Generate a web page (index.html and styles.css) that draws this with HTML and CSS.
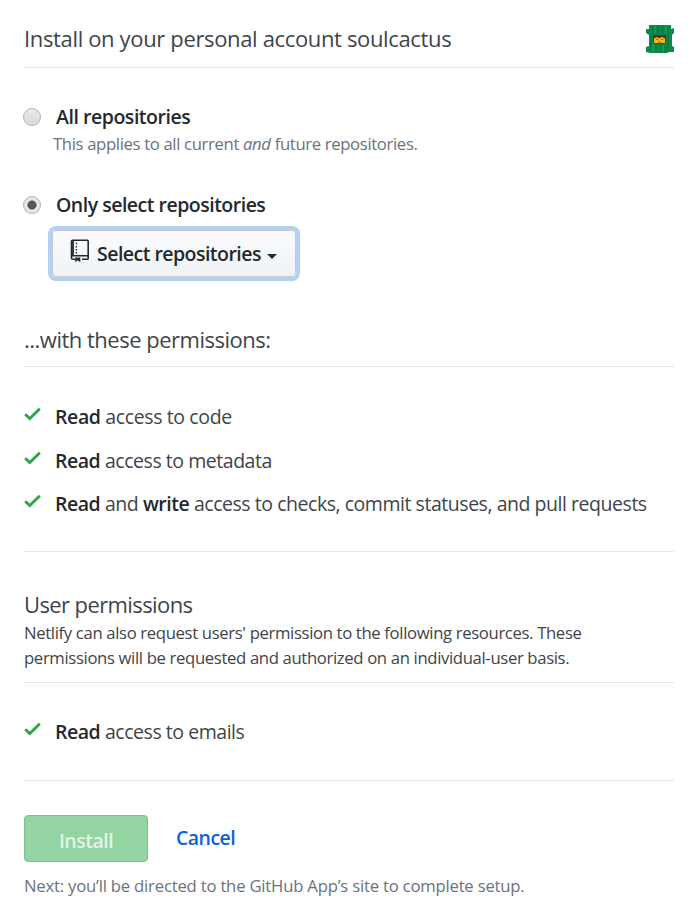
FILE: index.html
```html
<!DOCTYPE html>
<html lang="en">
<head>
<meta charset="utf-8">
<title>Install Netlify</title>
<link rel="stylesheet" href="styles.css">
</head>
<body>
<svg width="0" height="0" class="defs">
  <symbol id="check" viewBox="0 0 17 14"><path d="M1.2 7.2 5.8 11.5 15.8 1.8" fill="none" stroke="#28a745" stroke-width="2.9"/></symbol>
</svg>
<main class="page">
  <header class="header">
    <h1 class="title t-install">Install on your personal account soulcactus</h1>
    <svg class="avatar" viewBox="0 0 30 30">
      <path d="M4 1H26V5L29 4V9L27 11V22L29 23V28H24L22 29H5L1 28V23L4 22V11L1 9V5H4Z" fill="#0b8a4b"/>
      <path d="M8 2V10M13 1V9M18 2V10M23 3V26M6 12V27M11 22V28M16 21V28M20 22V28" stroke="#067540" stroke-width="1.2"/>
      <path d="M10 2V9M21 2V9M8 20V28M18 21V28" stroke="#25aa66" stroke-width="1"/>
      <path d="M8 11H21V18L19 20H10L8 18Z" fill="#543719"/>
      <path d="M9 14.500 12 13 14 14.500 17 13 20 14.500V19H9Z" fill="#f2b51d"/>
      <path d="M11 15.500H13M16 15.500H18M13 18H16" stroke="#a3620e" stroke-width="1"/>
    </svg>
  </header>

  <section class="choices">
    <label class="choice"><span class="radio"></span><strong class="t-all">All repositories</strong></label>
    <p class="note"><span class="t-applies">This applies to all current <em>and</em> future repositories.</span></p>
    <label class="choice second"><span class="radio on"></span><strong class="t-only">Only select repositories</strong></label>
    <button class="select" type="button">
      <svg class="repo" viewBox="0 0 20 24">
        <path d="M2.500 1.200H17.200Q18.200 1.200 18.200 2.200V19.200Q18.200 20.300 17.200 20.300H12M5 20.300H2.700Q1.500 20.300 1.500 19V2.200Q1.500 1.200 2.500 1.200M1.500 16.800H18.200" fill="none" stroke="#24292e" stroke-width="1.6"/>
        <path d="M3 1.500V16.500" stroke="#24292e" stroke-width="1.8"/>
        <path d="M6.400 3.800V15" stroke="#24292e" stroke-width="1.4" stroke-dasharray="1.5 1.6"/>
        <path d="M5.200 18.500H10.300V23.200L7.700 21.200 5.200 23.200Z" fill="#24292e"/>
      </svg>
      <span class="t-select">Select repositories</span>
      <span class="caret"></span>
    </button>
  </section>

  <h2 class="title permissions"><span class="t-with">...with these permissions:</span></h2>
  <ul class="list">
    <li><svg class="check"><use href="#check"/></svg><span class="t-code"><b>Read</b> access to code</span></li>
    <li><svg class="check"><use href="#check"/></svg><span class="t-meta"><b>Read</b> access to metadata</span></li>
    <li><svg class="check"><use href="#check"/></svg><span class="t-checks"><b>Read</b> and <b>write</b> access to checks, commit statuses, and pull requests</span></li>
  </ul>

  <section class="user">
    <h2 class="title"><span class="t-user">User permissions</span></h2>
    <p>Netlify can also request users' permission to the following resources. These<br>permissions will be requested and authorized on an individual-user basis.</p>
  </section>
  <ul class="list emails">
    <li><svg class="check"><use href="#check"/></svg><span class="t-meta"><b>Read</b> access to emails</span></li>
  </ul>

  <footer class="footer">
    <div class="actions">
      <button class="install" type="button" disabled>Install</button>
      <a class="cancel">Cancel</a>
    </div>
    <p class="next">Next: you’ll be directed to the GitHub App’s site to complete setup.</p>
  </footer>
</main>
</body>
</html>
```
FILE: styles.css
```css
* { box-sizing: border-box; }
body { margin: 0; background: #fff; color: #3f444a; font: 19.5px/28px "Open Sans", "Noto Sans", sans-serif; }
h1, h2, p, ul { margin: 0; padding: 0; }
ul { list-style: none; }
strong, b { font-weight: 600; color: #24292e; }
.defs { position: absolute; }
.page { width: 650px; margin-left: 24px; white-space: nowrap; }
.header { display: flex; justify-content: space-between; height: 68px; padding-top: 22px; border-bottom: 1px solid #e3e7eb; }
.title { font-size: 22px; line-height: 32px; font-weight: 400; }
.avatar { width: 30px; height: 30px; margin: 2px -1px 0 0; }
.choices { padding-top: 35px; }
.choice { display: flex; align-items: center; height: 28px; }
.choice.second { margin-top: 35px; }
.radio { width: 18px; height: 18px; margin: 0 15px 0 -1px; border: 1px solid #b4b4b4; border-radius: 50%; background: linear-gradient(#e9e9e9, #d8d8d8); }
.radio.on { background: radial-gradient(circle, #555 0 4px, #e6e6e6 5px); }
.note { padding-left: 29px; font-size: 16.7px; line-height: 25px; letter-spacing: -.35px; color: #6a737d; }
.select { display: flex; align-items: center; width: 244px; height: 47px; margin: 11px 0 0 28px; padding: 1px 0 0 17px; border: 1px solid #c5c9ce; border-radius: 4px; background: linear-gradient(#fafbfc, #eff3f6); box-shadow: 0 0 0 4px #b3d1f3; font: 600 19.5px/28px "Open Sans", "Noto Sans", sans-serif; color: #24292e; }
.repo { width: 20px; height: 24px; margin: -6px 7px 0 0; flex: none; }
.caret { margin: 4px 0 0 6px; border: 5px solid transparent; border-top-color: #24292e; border-bottom: 0; }
.permissions { height: 44px; margin-top: 46px; border-bottom: 1px solid #e6e8ec; }
.list { display: grid; gap: 15.5px; height: 185px; padding-top: 36px; align-content: start; border-bottom: 1px solid #e6e8ea; }
.list li { display: flex; height: 28px; }
.check { width: 17px; height: 14px; margin: 4px 14px 0 0; flex: none; }
.user { height: 131px; padding-top: 36px; border-bottom: 1px solid #e6e8ea; }
.user p { font-size: 16.7px; line-height: 25px; letter-spacing: -.35px; }
.emails { height: 98px; padding-top: 35px; }
.footer { padding-top: 34px; }
.actions { display: flex; height: 47px; }
.install { width: 124px; height: 47px; padding: 4px 0 0; border: 1px solid #80bd90; border-radius: 4px; background: #94d3a2; color: #e3f4e6; font: 600 19.5px/28px "Open Sans", "Noto Sans", sans-serif; letter-spacing: -.5px; }
.cancel { margin: 9px 0 0 28px; color: #0b62d8; font-weight: 600; letter-spacing: -.55px; }
.next { margin-top: 11px; font-size: 16.7px; line-height: 25px; letter-spacing: -.21px; color: #6a737d; }
.t-install { letter-spacing: -.35px; }
.t-with { letter-spacing: -.5px; }
.t-user { letter-spacing: -.6px; }
.t-all { letter-spacing: -.46px; }
.t-only { letter-spacing: -.5px; }
.t-select { letter-spacing: -.53px; }
.t-code { letter-spacing: -.38px; }
.t-meta, .t-checks { letter-spacing: -.46px; }
```
